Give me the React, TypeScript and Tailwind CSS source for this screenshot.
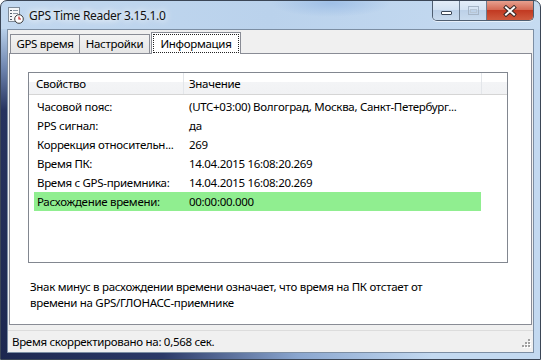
import React from 'react';

const rows: [string, string][] = [
  ['Часовой пояс:', '(UTC+03:00) Волгоград, Москва, Санкт-Петербург...'],
  ['PPS сигнал:', 'да'],
  ['Коррекция относительн...', '269'],
  ['Время ПК:', '14.04.2015 16:08:20.269'],
  ['Время с GPS-приемника:', '14.04.2015 16:08:20.269'],
  ['Расхождение времени:', '00:00:00.000'],
];

const AppIcon: React.FC = () => (
  <svg width="17" height="17" viewBox="0 0 17 17">
    <rect x="1.5" y="0.5" width="11" height="14" fill="#f4f6f8" stroke="#7d8a98" />
    <rect x="3" y="3" width="2" height="1" fill="#4d5a68" />
    <rect x="6" y="3" width="5" height="1" fill="#8a96a3" />
    <rect x="3" y="6" width="2" height="1" fill="#4d5a68" />
    <rect x="6" y="6" width="5" height="1" fill="#8a96a3" />
    <rect x="3" y="9" width="2" height="1" fill="#4d5a68" />
    <rect x="3" y="12" width="2" height="1" fill="#4d5a68" />
    <circle cx="12" cy="12" r="4.3" fill="#fff" stroke="#3b3b3b" strokeWidth="1" />
    <path d="M12 9.5V12h2" fill="none" stroke="#c62828" strokeWidth="1.2" />
  </svg>
);

const CaptionButtons: React.FC = () => (
  <div className="flex h-[20px] rounded-b-[5px] border border-t-0 border-[#4f5e70] overflow-hidden shadow-[0_1px_0_rgba(255,255,255,0.6)]">
    <div className="w-[27px] flex items-center justify-center border-r border-[#6b7b8e] bg-[linear-gradient(#e3edf8_0%,#d3e2f2_50%,#bdd1e8_50%,#c9dbee_100%)]">
      <div className="mt-[5px] w-[11px] h-[4px] bg-white border border-[#3c4858] rounded-[1px]" />
    </div>
    <div className="w-[27px] flex items-center justify-center border-r border-[#6b7b8e] bg-[linear-gradient(#e3edf8_0%,#d3e2f2_50%,#bdd1e8_50%,#c9dbee_100%)]">
      <div className="w-[11px] h-[9px] border border-[#a6b5c6] flex items-center justify-center">
        <div className="w-[7px] h-[4px] border border-[#b8c6d5]" />
      </div>
    </div>
    <div className="w-[46px] flex items-center justify-center bg-[linear-gradient(#e6a08f_0%,#d2654f_50%,#c23a22_50%,#cf5a3e_100%)]">
      <svg width="14" height="12" viewBox="0 0 14 12">
        <path d="M3 2.5l8 7M11 2.5l-8 7" stroke="#3a2a28" strokeWidth="4" strokeLinecap="square" />
        <path d="M3 2.5l8 7M11 2.5l-8 7" stroke="#fff" strokeWidth="2" strokeLinecap="square" />
      </svg>
    </div>
  </div>
);

const Grip: React.FC = () => (
  <svg width="12" height="12" viewBox="0 0 12 12">
    {[
      [8, 0],
      [5, 3],
      [8, 3],
      [2, 6],
      [5, 6],
      [8, 6],
    ].map(([x, y], i) => (
      <g key={i}>
        <rect x={x + 1} y={y + 1} width="2" height="2" fill="#ffffff" />
        <rect x={x} y={y} width="2" height="2" fill="#a0a0a0" />
      </g>
    ))}
  </svg>
);

const App: React.FC = () => {
  return (
    <div className="w-[541px] h-[360px] flex flex-col overflow-hidden rounded-t-[7px] border border-[#3b4656] bg-[linear-gradient(90deg,#c2d8ef_0%,#bad2ec_50%,#c6dbf1_100%)] font-['Segoe_UI','Noto_Sans',sans-serif] text-[11.5px] tracking-[-0.3px] text-black">
      {/* title bar */}
      <div className="h-[28px] shrink-0 flex items-start bg-[radial-gradient(ellipse_60px_14px_at_330px_2px,#9fbfe6,transparent)]">
        <div className="ml-[6px] mt-[6px]">
          <AppIcon />
        </div>
        <span className="ml-[5px] mt-[6px] text-[12px] leading-[17px] text-[#111] [text-shadow:0_0_6px_#fff,0_0_10px_#fff]">
          GPS Time Reader 3.15.1.0
        </span>
        <div className="ml-auto mr-[6px]">
          <CaptionButtons />
        </div>
      </div>

      <div className="flex flex-1 min-h-0">
        <div className="w-[6px] bg-[linear-gradient(#b8d0ea_0%,#6f86b0_12%,#27335f_25%,#1d2850_100%)]" />

        {/* client area */}
        <div className="w-[527px] h-[324px] flex flex-col border border-[#7c8ea3] bg-[#f0f0f0]">
          {/* tabs */}
          <div className="h-[22px] mt-[1px] pl-[2px] flex items-end">
            <div className="w-[70px] h-[19px] flex items-center justify-center border border-b-0 border-[#898c95] bg-[linear-gradient(#f3f3f3,#e6e6e6)]">
              GPS время
            </div>
            <div className="w-[70px] h-[19px] flex items-center justify-center border border-b-0 border-l-0 border-[#898c95] bg-[linear-gradient(#f3f3f3,#e6e6e6)]">
              Настройки
            </div>
            <div className="relative z-10 ml-[1px] -mb-[1px] w-[90px] h-[22px] flex items-start justify-center pt-[1px] border border-b-0 border-[#898c95] bg-white">
              <div className="w-[86px] h-[19px] flex items-center justify-center border border-dotted border-[#222]">
                Информация
              </div>
            </div>
          </div>

          {/* tab page */}
          <div className="ml-[1px] mr-[1px] h-[272px] border border-[#898c95] bg-white flex flex-col">
            <div className="ml-[18px] mt-[18px] w-[480px] h-[191px] border border-[#828790] bg-white flex flex-col">
              {/* header */}
              <div className="h-[22px] flex border-b border-[#d5d5d5] bg-[linear-gradient(#ffffff_0%,#ffffff_42%,#f3f4f6_42%,#f1f2f4_100%)]">
                <div className="w-[155px] pl-[7px] flex items-center border-r border-[#e3e6ea]">Свойство</div>
                <div className="w-[298px] pl-[5px] flex items-center border-r border-[#e3e6ea]">Значение</div>
                <div className="flex-1" />
              </div>
              <div className="pt-[2px]">
                {rows.map(([k, v], i) => (
                  <div
                    key={k}
                    className={`ml-[5px] w-[447px] h-[19px] flex items-center ${i === rows.length - 1 ? 'bg-[#90ee90]' : ''}`}
                  >
                    <div className="w-[149px] pl-[3px] whitespace-nowrap overflow-hidden">{k}</div>
                    <div className="flex-1 pl-[6px] whitespace-nowrap overflow-hidden">{v}</div>
                  </div>
                ))}
              </div>
            </div>
            <p className="ml-[20px] mt-[16px] leading-[16px]">
              Знак минус в расхождении времени означает, что время на ПК отстает от
              <br />
              времени на GPS/ГЛОНАСС-приемнике
            </p>
          </div>

          {/* status bar */}
          <div className="mt-auto h-[22px] flex items-center border-t border-[#dcdcdc] bg-[#f0f0f0]">
            <span className="pl-[4px]">Время скорректировано на: 0,568 сек.</span>
            <div className="ml-auto mr-[1px] self-end mb-[1px]">
              <Grip />
            </div>
          </div>
        </div>

        <div className="w-[6px] bg-[#c3d9f0]" />
      </div>

      <div className="h-[6px] shrink-0 bg-[linear-gradient(90deg,#1d2850_0%,#2c3a68_30%,#8aa6cf_55%,#c3d9f0_80%)]" />
    </div>
  );
};

export default App;
